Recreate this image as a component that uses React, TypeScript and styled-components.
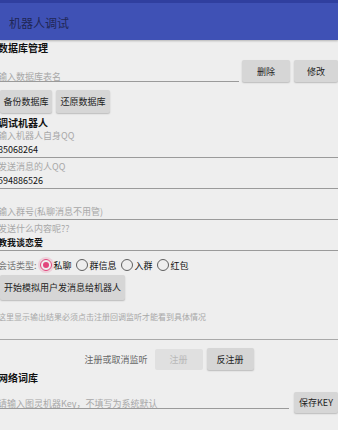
import React from 'react';
import styled, { createGlobalStyle } from 'styled-components';

const GlobalStyle = createGlobalStyle`
  html, body {
    margin: 0;
    padding: 0;
    background: #eeeeee;
  }
  body {
    font-family: "Noto Sans CJK SC", "Noto Sans", sans-serif;
    overflow: hidden;
  }
  * {
    box-sizing: border-box;
  }
`;

const Screen = styled.div`
  width: 338px;
  height: 430px;
  background: #eeeeee;
  overflow: hidden;
`;

const AppBar = styled.header`
  height: 40px;
  border-top: 3px solid #303f9f;
  background: #3f51b5;
  display: flex;
  align-items: center;
  padding: 2px 0 0 9px;
  box-shadow: 0 1px 2px rgba(0, 0, 0, 0.25);
  position: relative;
  z-index: 1;
`;

const AppTitle = styled.h1`
  margin: 0;
  font-size: 12px;
  font-weight: 400;
  color: #1f2756;
`;

const SectionTitle = styled.h2<{ $top?: number }>`
  margin: ${p => p.$top ?? 0}px 0 0 -2px;
  font-size: 10px;
  line-height: 14px;
  font-weight: 700;
  color: #111;
`;

const InputRow = styled.div<{ $top: number }>`
  display: flex;
  align-items: flex-start;
  margin-top: ${p => p.$top}px;
`;

const LineInput = styled.input<{ $top: number; $gap: number }>`
  flex: 1;
  min-width: 0;
  margin: ${p => p.$top}px ${p => p.$gap}px 0 0;
  height: 11px;
  padding: 0;
  text-indent: -2px;
  border: none;
  border-bottom: 1px solid #9a9a9a;
  background: transparent;
  font-family: inherit;
  font-size: 9px;
  line-height: 10px;
  color: #111;
  outline: none;
  &::placeholder {
    color: #a8a8a8;
  }
`;

const Button = styled.button<{ $w: number; $h?: number; $off?: boolean }>`
  flex: none;
  width: ${p => p.$w}px;
  height: ${p => p.$h ?? 22}px;
  padding: 0;
  border: none;
  border-radius: 2px;
  background: ${p => (p.$off ? '#e0e0e0' : '#d6d6d6')};
  color: ${p => (p.$off ? '#b8b8b8' : '#222')};
  box-shadow: ${p => (p.$off ? 'none' : '0 1px 1.5px rgba(0, 0, 0, 0.22)')};
  font-family: inherit;
  font-size: 9px;
  & + & {
    margin-left: 4px;
  }
`;

const ButtonRow = styled.div<{ $top: number }>`
  display: flex;
  margin-top: ${p => p.$top}px;
`;

const Field = styled.label`
  display: block;
  border-bottom: 1px solid #9a9a9a;
  & + & {
    margin-top: 3px;
  }
`;

const Hint = styled.div`
  height: 12px;
  margin-left: -2px;
  font-size: 9px;
  line-height: 12px;
  color: #a8a8a8;
`;

const Value = styled.input<{ $strong?: boolean }>`
  display: block;
  width: 100%;
  height: 15px;
  padding: 0;
  margin: 0;
  text-indent: -2px;
  border: none;
  background: transparent;
  font-family: inherit;
  font-size: 9px;
  line-height: 15px;
  font-weight: ${p => (p.$strong ? 700 : 400)};
  color: #111;
  outline: none;
  &::placeholder {
    color: #a8a8a8;
  }
`;

const RadioRow = styled.div`
  display: flex;
  align-items: center;
  height: 20px;
  margin-top: 4px;
  font-size: 9px;
`;

const RadioCaption = styled.span`
  margin: 0 3px 0 -2px;
  color: #777;
`;

const RadioItem = styled.label`
  display: flex;
  align-items: center;
  margin-right: 4px;
  color: #111;
`;

const RadioCircle = styled.span<{ $checked?: boolean }>`
  width: 12px;
  height: 12px;
  border-radius: 50%;
  border: 1.5px solid ${p => (p.$checked ? '#e2457c' : '#5f5f5f')};
  box-shadow: ${p => (p.$checked ? '0 0 0 2px rgba(233, 30, 99, 0.14)' : 'none')};
  display: flex;
  align-items: center;
  justify-content: center;
  margin-right: 2px;
  &::after {
    content: '';
    display: ${p => (p.$checked ? 'block' : 'none')};
    width: 6px;
    height: 6px;
    border-radius: 50%;
    background: #e2457c;
  }
`;

const Output = styled.div`
  height: 40px;
  padding: 11px 0 0 0;
  text-indent: -2px;
  border-bottom: 1px solid #a9a9a9;
  font-size: 8px;
  line-height: 12px;
  color: #a8a8a8;
`;

const RegisterRow = styled.div`
  display: flex;
  justify-content: center;
  align-items: center;
  margin-top: 8px;
`;

const RegisterLabel = styled.span`
  font-size: 9px;
  color: #666;
  margin-right: 7px;
`;

const types = [
  { label: '私聊', checked: true },
  { label: '群信息' },
  { label: '入群' },
  { label: '红包' },
];

const App: React.FC = () => {
  return (
    <Screen>
      <GlobalStyle />
      <AppBar>
        <AppTitle>机器人调试</AppTitle>
      </AppBar>

      <SectionTitle $top={1}>数据库管理</SectionTitle>
      <InputRow $top={5}>
        <LineInput $top={11} $gap={3} placeholder="输入数据库表名" />
        <Button $w={48}>删除</Button>
        <Button $w={44}>修改</Button>
      </InputRow>
      <ButtonRow $top={8}>
        <Button $w={52} $h={23}>备份数据库</Button>
        <Button $w={54} $h={23}>还原数据库</Button>
      </ButtonRow>

      <SectionTitle $top={3}>调试机器人</SectionTitle>
      <Field>
        <Hint>输入机器人自身QQ</Hint>
        <Value defaultValue="85068264" />
      </Field>
      <Field>
        <Hint>发送消息的人QQ</Hint>
        <Value defaultValue="594886526" />
      </Field>
      <Field>
        <Hint />
        <Value placeholder="输入群号(私聊消息不用管)" />
      </Field>
      <Field>
        <Hint>发送什么内容呢??</Hint>
        <Value $strong defaultValue="教我谈恋爱" />
      </Field>

      <RadioRow>
        <RadioCaption>会话类型:</RadioCaption>
        {types.map(t => (
          <RadioItem key={t.label}>
            <RadioCircle $checked={t.checked} />
            {t.label}
          </RadioItem>
        ))}
      </RadioRow>
      <ButtonRow $top={0}>
        <Button $w={125} $h={25}>开始模拟用户发消息给机器人</Button>
      </ButtonRow>
      <Output>这里显示输出结果必须点击注册回调监听才能看到具体情况</Output>

      <RegisterRow>
        <RegisterLabel>注册或取消监听</RegisterLabel>
        <Button $w={48} $h={21} $off>注册</Button>
        <Button $w={47}>反注册</Button>
      </RegisterRow>

      <SectionTitle $top={1}>网络词库</SectionTitle>
      <InputRow $top={7}>
        <LineInput $top={6} $gap={5} placeholder="请输入图灵机器Key，不填写为系统默认" />
        <Button $w={44} $h={21}>保存KEY</Button>
      </InputRow>
    </Screen>
  );
};

export default App;
